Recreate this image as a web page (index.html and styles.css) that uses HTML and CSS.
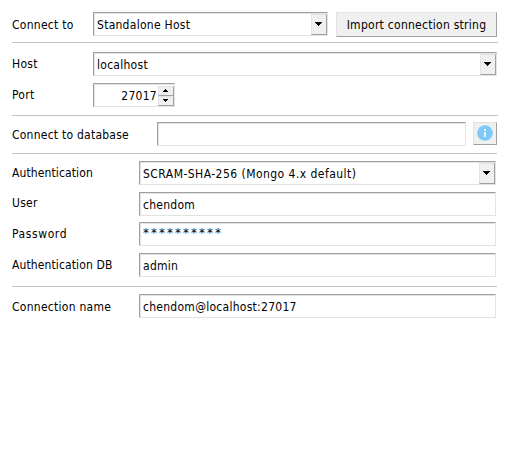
FILE: index.html
```html
<!DOCTYPE html>
<html lang="en">
<head>
<meta charset="utf-8">
<title>Connection</title>
<link rel="stylesheet" href="styles.css">
</head>
<body>
<main class="form">
  <section class="group group-target">
    <div class="row">
      <label class="label label-short low">Connect to</label>
      <div class="field select select-type"><span class="value">Standalone Host</span><span class="drop"><svg width="7" height="4" viewBox="0 0 7 4"><path d="M0 0h7v1H6v1H5v1H4v1H3V3H2V2H1V1H0z"/></svg></span></div>
      <button class="import"><span>Import connection string</span></button>
    </div>
  </section>
  <section class="group group-host">
    <div class="row">
      <label class="label label-short">Host</label>
      <div class="field select select-host"><span class="value">localhost</span><span class="drop"><svg width="7" height="4" viewBox="0 0 7 4"><path d="M0 0h7v1H6v1H5v1H4v1H3V3H2V2H1V1H0z"/></svg></span></div>
    </div>
    <div class="row row-port">
      <label class="label label-short">Port</label>
      <div class="field port"><span class="value number">27017</span><span class="spin"><span class="step"><svg width="5" height="3" viewBox="0 0 5 3"><path d="M2 0h1v1h1v1h1v1H0V2h1V1h1z"/></svg></span><span class="step"><svg width="5" height="3" viewBox="0 0 5 3"><path d="M0 0h5v1H4v1H3v1H2V2H1V1H0z"/></svg></span></span></div>
    </div>
  </section>
  <section class="group group-db">
    <div class="row">
      <label class="label label-db">Connect to database</label>
      <div class="field database"></div>
      <button class="info" aria-label="Info"><svg width="16" height="16" viewBox="0 0 16 16"><circle cx="8" cy="8" r="7.8" fill="#7ccaf9"/><path fill="#f0f0f0" d="M7 4h2v2H7zM7 7h2v5H7z"/></svg></button>
    </div>
  </section>
  <section class="group group-auth">
    <div class="row">
      <label class="label label-long auth">Authentication</label>
      <div class="field select wide"><span class="value scram">SCRAM-SHA-256 (Mongo 4.x default)</span><span class="drop"><svg width="7" height="4" viewBox="0 0 7 4"><path d="M0 0h7v1H6v1H5v1H4v1H3V3H2V2H1V1H0z"/></svg></span></div>
    </div>
    <div class="row row-user">
      <label class="label label-long high">User</label>
      <div class="field wide"><span class="value">chendom</span></div>
    </div>
    <div class="row row-password">
      <label class="label label-long password">Password</label>
      <div class="field wide"><span class="value secret">**********</span></div>
    </div>
    <div class="row row-authdb">
      <label class="label label-long auth">Authentication DB</label>
      <div class="field wide"><span class="value">admin</span></div>
    </div>
  </section>
  <section class="group group-name">
    <div class="row">
      <label class="label label-long low">Connection name</label>
      <div class="field wide"><span class="value">chendom@localhost:27017</span></div>
    </div>
  </section>
</main>
</body>
</html>
```
FILE: styles.css
```css
* { box-sizing: border-box; }
body {
  margin: 0;
  background: #fff;
  color: #000;
  font: 12px/16px "DejaVu Sans Condensed", "DejaVu Sans", sans-serif;
  font-stretch: condensed;
  letter-spacing: 0.27px;
}
.form { width: 486px; margin-left: 12px; padding-top: 12px; }
.group + .group { border-top: 1px solid #c3c3c3; }
.group-target { height: 30px; }
.group-host { height: 73px; padding-top: 9px; }
.group-db { height: 38px; padding-top: 6px; }
.group-auth { height: 133px; padding-top: 7px; }
.group-auth, .group-name { width: 485px; }
.group-name { padding-top: 7px; }
.row { display: flex; height: 24px; align-items: flex-start; white-space: nowrap; }
.row-port, .row-user, .row-authdb { margin-top: 7px; }
.row-password { margin-top: 6px; }
.label { flex: none; padding-top: 4px; }
.low { padding-top: 5px; }
.high { padding-top: 3px; }
.label-short { width: 81px; }
.label-long { width: 127px; }
.label-db { width: 145px; padding-top: 5px; letter-spacing: 0.24px; }
.auth { letter-spacing: 0.12px; }
.password { letter-spacing: 0.6px; }
.field {
  display: flex;
  height: 24px;
  padding: 1px 0 0 1px;
  border: 1px solid;
  border-color: #a0a0a0 #e3e3e3 #e3e3e3 #a0a0a0;
  box-shadow: inset 1px 1px #e3e3e3;
}
.select-type { width: 235px; }
.select-host { width: 404px; }
.wide { width: 357px; }
.port { width: 82px; }
.database { width: 309px; }
.value { flex: 1; padding: 3px 0 0 2px; }
.number { text-align: right; }
.scram { letter-spacing: 0.46px; }
.drop, .info, .import {
  border: 1px solid;
  border-color: #e3e3e3 #a0a0a0 #a0a0a0 #e3e3e3;
  background: #f0f0f0;
}
.drop { display: flex; width: 16px; height: 21px; padding: 0 1px 1px 0; align-items: center; justify-content: center; }
.import { width: 161px; height: 25px; margin-left: 8px; padding: 0; color: #000; font: inherit; letter-spacing: inherit; }
.info { display: flex; width: 24px; height: 23px; margin-left: 7px; padding: 0 0 1px; align-items: center; justify-content: center; }
.spin { width: 16px; height: 21px; margin-left: 1px; padding-top: 1px; }
.step {
  display: flex;
  height: 10px;
  padding: 0 1px 1px 0;
  align-items: center;
  justify-content: center;
  border: 1px solid;
  border-color: #e3e3e3 #a0a0a0 #a0a0a0 #e3e3e3;
  background: #f0f0f0;
}
.secret { padding-top: 1px; font-family: "DejaVu Sans", sans-serif; font-stretch: normal; letter-spacing: 2px; }
```
